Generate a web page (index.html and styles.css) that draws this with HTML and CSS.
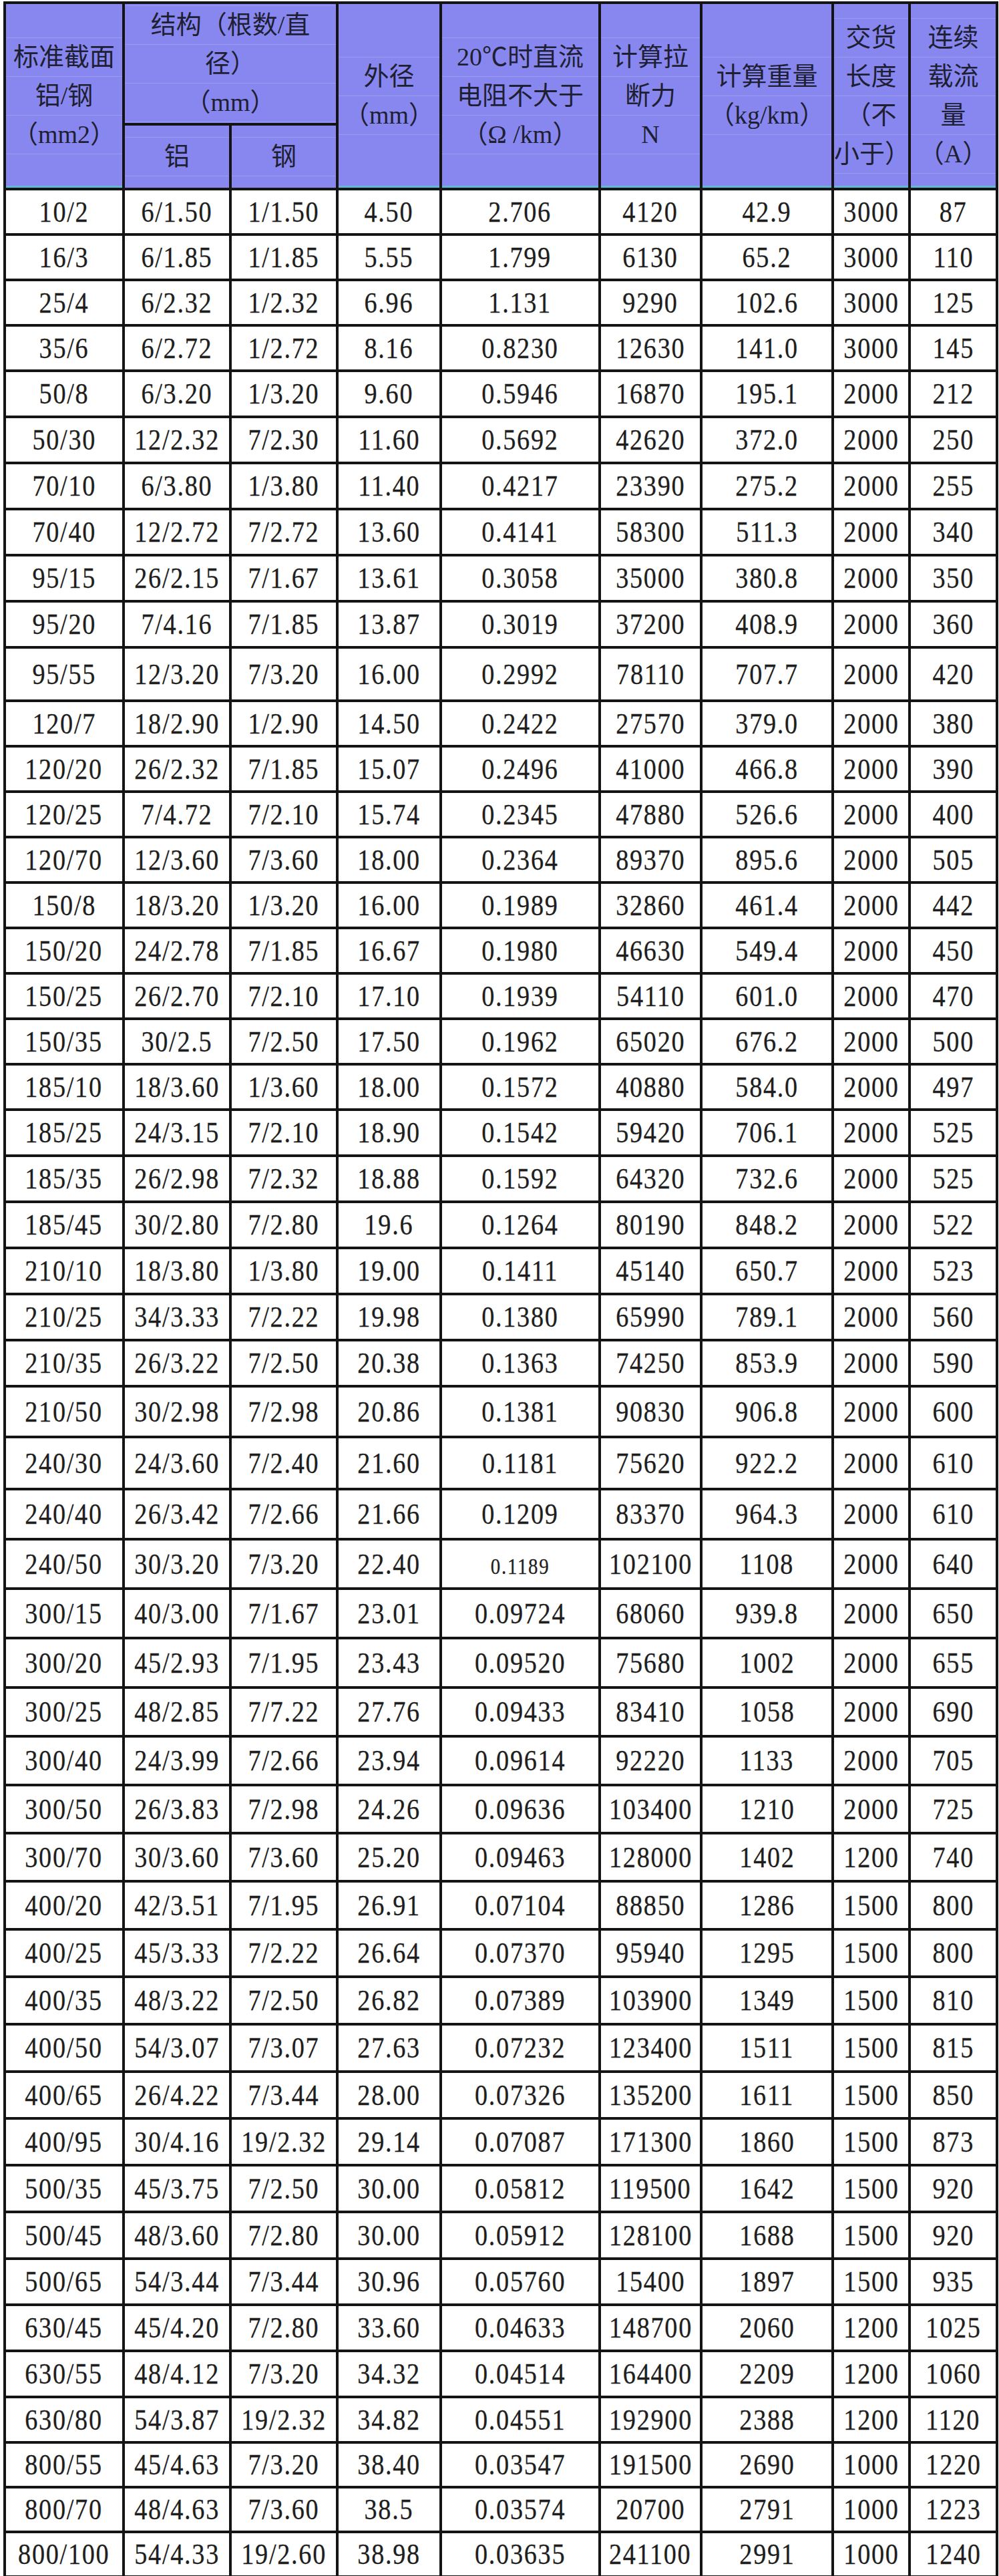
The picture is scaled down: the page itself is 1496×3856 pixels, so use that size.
FILE: index.html
```html
<!DOCTYPE html>
<html lang="zh-CN">
<head>
<meta charset="utf-8">
<title>钢芯铝绞线规格表</title>
<link rel="stylesheet" href="styles.css">
</head>
<body>
<table class="spec">
  <colgroup>
    <col class="c-std"><col class="c-al"><col class="c-st"><col class="c-od"><col class="c-res"><col class="c-ten"><col class="c-wt"><col class="c-len"><col class="c-cur">
  </colgroup>
  <thead>
    <tr class="hr1">
      <th rowspan="2" class="rs"><div class="ln">标准截面</div><div class="ln">铝/钢</div><div class="ln last">（mm2）</div></th>
      <th colspan="2"><div class="ln">结构（根数/直</div><div class="ln">径）</div><div class="ln last">（mm）</div></th>
      <th rowspan="2" class="rs"><div class="ln">外径</div><div class="ln last">（mm）</div></th>
      <th rowspan="2" class="rs"><div class="ln">20℃时直流</div><div class="ln">电阻不大于</div><div class="ln last">（Ω /km）</div></th>
      <th rowspan="2" class="rs"><div class="ln">计算拉</div><div class="ln">断力</div><div class="ln last">N</div></th>
      <th rowspan="2" class="rs"><div class="ln">计算重量</div><div class="ln last">（kg/km）</div></th>
      <th rowspan="2" class="rs narrow"><div class="ln">交货</div><div class="ln">长度</div><div class="ln">（不</div><div class="ln last">小于）</div></th>
      <th rowspan="2" class="rs"><div class="ln">连续</div><div class="ln">载流</div><div class="ln">量</div><div class="ln last">（A）</div></th>
    </tr>
    <tr class="hr2">
      <th><div class="ln last">铝</div></th>
      <th><div class="ln last">钢</div></th>
    </tr>
  </thead>
  <tbody>
    <tr class="h68"><td><span>10/2</span></td><td><span>6/1.50</span></td><td><span>1/1.50</span></td><td><span>4.50</span></td><td><span>2.706</span></td><td><span>4120</span></td><td><span>42.9</span></td><td><span>3000</span></td><td><span>87</span></td></tr>
    <tr class="h68"><td><span>16/3</span></td><td><span>6/1.85</span></td><td><span>1/1.85</span></td><td><span>5.55</span></td><td><span>1.799</span></td><td><span>6130</span></td><td><span>65.2</span></td><td><span>3000</span></td><td><span>110</span></td></tr>
    <tr class="h68"><td><span>25/4</span></td><td><span>6/2.32</span></td><td><span>1/2.32</span></td><td><span>6.96</span></td><td><span>1.131</span></td><td><span>9290</span></td><td><span>102.6</span></td><td><span>3000</span></td><td><span>125</span></td></tr>
    <tr class="h68"><td><span>35/6</span></td><td><span>6/2.72</span></td><td><span>1/2.72</span></td><td><span>8.16</span></td><td><span>0.8230</span></td><td><span>12630</span></td><td><span>141.0</span></td><td><span>3000</span></td><td><span>145</span></td></tr>
    <tr class="h69"><td><span>50/8</span></td><td><span>6/3.20</span></td><td><span>1/3.20</span></td><td><span>9.60</span></td><td><span>0.5946</span></td><td><span>16870</span></td><td><span>195.1</span></td><td><span>2000</span></td><td><span>212</span></td></tr>
    <tr class="h69"><td><span>50/30</span></td><td><span>12/2.32</span></td><td><span>7/2.30</span></td><td><span>11.60</span></td><td><span>0.5692</span></td><td><span>42620</span></td><td><span>372.0</span></td><td><span>2000</span></td><td><span>250</span></td></tr>
    <tr class="h69"><td><span>70/10</span></td><td><span>6/3.80</span></td><td><span>1/3.80</span></td><td><span>11.40</span></td><td><span>0.4217</span></td><td><span>23390</span></td><td><span>275.2</span></td><td><span>2000</span></td><td><span>255</span></td></tr>
    <tr class="h69"><td><span>70/40</span></td><td><span>12/2.72</span></td><td><span>7/2.72</span></td><td><span>13.60</span></td><td><span>0.4141</span></td><td><span>58300</span></td><td><span>511.3</span></td><td><span>2000</span></td><td><span>340</span></td></tr>
    <tr class="h69"><td><span>95/15</span></td><td><span>26/2.15</span></td><td><span>7/1.67</span></td><td><span>13.61</span></td><td><span>0.3058</span></td><td><span>35000</span></td><td><span>380.8</span></td><td><span>2000</span></td><td><span>350</span></td></tr>
    <tr class="h69"><td><span>95/20</span></td><td><span>7/4.16</span></td><td><span>7/1.85</span></td><td><span>13.87</span></td><td><span>0.3019</span></td><td><span>37200</span></td><td><span>408.9</span></td><td><span>2000</span></td><td><span>360</span></td></tr>
    <tr class="h80"><td><span>95/55</span></td><td><span>12/3.20</span></td><td><span>7/3.20</span></td><td><span>16.00</span></td><td><span>0.2992</span></td><td><span>78110</span></td><td><span>707.7</span></td><td><span>2000</span></td><td><span>420</span></td></tr>
    <tr class="h68"><td><span>120/7</span></td><td><span>18/2.90</span></td><td><span>1/2.90</span></td><td><span>14.50</span></td><td><span>0.2422</span></td><td><span>27570</span></td><td><span>379.0</span></td><td><span>2000</span></td><td><span>380</span></td></tr>
    <tr class="h68"><td><span>120/20</span></td><td><span>26/2.32</span></td><td><span>7/1.85</span></td><td><span>15.07</span></td><td><span>0.2496</span></td><td><span>41000</span></td><td><span>466.8</span></td><td><span>2000</span></td><td><span>390</span></td></tr>
    <tr class="h68"><td><span>120/25</span></td><td><span>7/4.72</span></td><td><span>7/2.10</span></td><td><span>15.74</span></td><td><span>0.2345</span></td><td><span>47880</span></td><td><span>526.6</span></td><td><span>2000</span></td><td><span>400</span></td></tr>
    <tr class="h68"><td><span>120/70</span></td><td><span>12/3.60</span></td><td><span>7/3.60</span></td><td><span>18.00</span></td><td><span>0.2364</span></td><td><span>89370</span></td><td><span>895.6</span></td><td><span>2000</span></td><td><span>505</span></td></tr>
    <tr class="h68"><td><span>150/8</span></td><td><span>18/3.20</span></td><td><span>1/3.20</span></td><td><span>16.00</span></td><td><span>0.1989</span></td><td><span>32860</span></td><td><span>461.4</span></td><td><span>2000</span></td><td><span>442</span></td></tr>
    <tr class="h68"><td><span>150/20</span></td><td><span>24/2.78</span></td><td><span>7/1.85</span></td><td><span>16.67</span></td><td><span>0.1980</span></td><td><span>46630</span></td><td><span>549.4</span></td><td><span>2000</span></td><td><span>450</span></td></tr>
    <tr class="h68"><td><span>150/25</span></td><td><span>26/2.70</span></td><td><span>7/2.10</span></td><td><span>17.10</span></td><td><span>0.1939</span></td><td><span>54110</span></td><td><span>601.0</span></td><td><span>2000</span></td><td><span>470</span></td></tr>
    <tr class="h68"><td><span>150/35</span></td><td><span>30/2.5</span></td><td><span>7/2.50</span></td><td><span>17.50</span></td><td><span>0.1962</span></td><td><span>65020</span></td><td><span>676.2</span></td><td><span>2000</span></td><td><span>500</span></td></tr>
    <tr class="h68"><td><span>185/10</span></td><td><span>18/3.60</span></td><td><span>1/3.60</span></td><td><span>18.00</span></td><td><span>0.1572</span></td><td><span>40880</span></td><td><span>584.0</span></td><td><span>2000</span></td><td><span>497</span></td></tr>
    <tr class="h69"><td><span>185/25</span></td><td><span>24/3.15</span></td><td><span>7/2.10</span></td><td><span>18.90</span></td><td><span>0.1542</span></td><td><span>59420</span></td><td><span>706.1</span></td><td><span>2000</span></td><td><span>525</span></td></tr>
    <tr class="h69"><td><span>185/35</span></td><td><span>26/2.98</span></td><td><span>7/2.32</span></td><td><span>18.88</span></td><td><span>0.1592</span></td><td><span>64320</span></td><td><span>732.6</span></td><td><span>2000</span></td><td><span>525</span></td></tr>
    <tr class="h69"><td><span>185/45</span></td><td><span>30/2.80</span></td><td><span>7/2.80</span></td><td><span>19.6</span></td><td><span>0.1264</span></td><td><span>80190</span></td><td><span>848.2</span></td><td><span>2000</span></td><td><span>522</span></td></tr>
    <tr class="h69"><td><span>210/10</span></td><td><span>18/3.80</span></td><td><span>1/3.80</span></td><td><span>19.00</span></td><td><span>0.1411</span></td><td><span>45140</span></td><td><span>650.7</span></td><td><span>2000</span></td><td><span>523</span></td></tr>
    <tr class="h69"><td><span>210/25</span></td><td><span>34/3.33</span></td><td><span>7/2.22</span></td><td><span>19.98</span></td><td><span>0.1380</span></td><td><span>65990</span></td><td><span>789.1</span></td><td><span>2000</span></td><td><span>560</span></td></tr>
    <tr class="h69"><td><span>210/35</span></td><td><span>26/3.22</span></td><td><span>7/2.50</span></td><td><span>20.38</span></td><td><span>0.1363</span></td><td><span>74250</span></td><td><span>853.9</span></td><td><span>2000</span></td><td><span>590</span></td></tr>
    <tr class="h76"><td><span>210/50</span></td><td><span>30/2.98</span></td><td><span>7/2.98</span></td><td><span>20.86</span></td><td><span>0.1381</span></td><td><span>90830</span></td><td><span>906.8</span></td><td><span>2000</span></td><td><span>600</span></td></tr>
    <tr class="h78 seam"><td><span>240/30</span></td><td><span>24/3.60</span></td><td><span>7/2.40</span></td><td><span>21.60</span></td><td><span>0.1181</span></td><td><span>75620</span></td><td><span>922.2</span></td><td><span>2000</span></td><td><span>610</span></td></tr>
    <tr class="h75"><td><span>240/40</span></td><td><span>26/3.42</span></td><td><span>7/2.66</span></td><td><span>21.66</span></td><td><span>0.1209</span></td><td><span>83370</span></td><td><span>964.3</span></td><td><span>2000</span></td><td><span>610</span></td></tr>
    <tr class="h74"><td><span>240/50</span></td><td><span>30/3.20</span></td><td><span>7/3.20</span></td><td><span>22.40</span></td><td><span class="sm">0.1189</span></td><td><span>102100</span></td><td><span>1108</span></td><td><span>2000</span></td><td><span>640</span></td></tr>
    <tr class="h74"><td><span>300/15</span></td><td><span>40/3.00</span></td><td><span>7/1.67</span></td><td><span>23.01</span></td><td><span>0.09724</span></td><td><span>68060</span></td><td><span>939.8</span></td><td><span>2000</span></td><td><span>650</span></td></tr>
    <tr class="h74"><td><span>300/20</span></td><td><span>45/2.93</span></td><td><span>7/1.95</span></td><td><span>23.43</span></td><td><span>0.09520</span></td><td><span>75680</span></td><td><span>1002</span></td><td><span>2000</span></td><td><span>655</span></td></tr>
    <tr class="h73"><td><span>300/25</span></td><td><span>48/2.85</span></td><td><span>7/7.22</span></td><td><span>27.76</span></td><td><span>0.09433</span></td><td><span>83410</span></td><td><span>1058</span></td><td><span>2000</span></td><td><span>690</span></td></tr>
    <tr class="h73"><td><span>300/40</span></td><td><span>24/3.99</span></td><td><span>7/2.66</span></td><td><span>23.94</span></td><td><span>0.09614</span></td><td><span>92220</span></td><td><span>1133</span></td><td><span>2000</span></td><td><span>705</span></td></tr>
    <tr class="h72"><td><span>300/50</span></td><td><span>26/3.83</span></td><td><span>7/2.98</span></td><td><span>24.26</span></td><td><span>0.09636</span></td><td><span>103400</span></td><td><span>1210</span></td><td><span>2000</span></td><td><span>725</span></td></tr>
    <tr class="h72"><td><span>300/70</span></td><td><span>30/3.60</span></td><td><span>7/3.60</span></td><td><span>25.20</span></td><td><span>0.09463</span></td><td><span>128000</span></td><td><span>1402</span></td><td><span>1200</span></td><td><span>740</span></td></tr>
    <tr class="h72"><td><span>400/20</span></td><td><span>42/3.51</span></td><td><span>7/1.95</span></td><td><span>26.91</span></td><td><span>0.07104</span></td><td><span>88850</span></td><td><span>1286</span></td><td><span>1500</span></td><td><span>800</span></td></tr>
    <tr class="h71"><td><span>400/25</span></td><td><span>45/3.33</span></td><td><span>7/2.22</span></td><td><span>26.64</span></td><td><span>0.07370</span></td><td><span>95940</span></td><td><span>1295</span></td><td><span>1500</span></td><td><span>800</span></td></tr>
    <tr class="h71"><td><span>400/35</span></td><td><span>48/3.22</span></td><td><span>7/2.50</span></td><td><span>26.82</span></td><td><span>0.07389</span></td><td><span>103900</span></td><td><span>1349</span></td><td><span>1500</span></td><td><span>810</span></td></tr>
    <tr class="h71"><td><span>400/50</span></td><td><span>54/3.07</span></td><td><span>7/3.07</span></td><td><span>27.63</span></td><td><span>0.07232</span></td><td><span>123400</span></td><td><span>1511</span></td><td><span>1500</span></td><td><span>815</span></td></tr>
    <tr class="h70"><td><span>400/65</span></td><td><span>26/4.22</span></td><td><span>7/3.44</span></td><td><span>28.00</span></td><td><span>0.07326</span></td><td><span>135200</span></td><td><span>1611</span></td><td><span>1500</span></td><td><span>850</span></td></tr>
    <tr class="h70"><td><span>400/95</span></td><td><span>30/4.16</span></td><td><span>19/2.32</span></td><td><span>29.14</span></td><td><span>0.07087</span></td><td><span>171300</span></td><td><span>1860</span></td><td><span>1500</span></td><td><span>873</span></td></tr>
    <tr class="h70"><td><span>500/35</span></td><td><span>45/3.75</span></td><td><span>7/2.50</span></td><td><span>30.00</span></td><td><span>0.05812</span></td><td><span>119500</span></td><td><span>1642</span></td><td><span>1500</span></td><td><span>920</span></td></tr>
    <tr class="h70"><td><span>500/45</span></td><td><span>48/3.60</span></td><td><span>7/2.80</span></td><td><span>30.00</span></td><td><span>0.05912</span></td><td><span>128100</span></td><td><span>1688</span></td><td><span>1500</span></td><td><span>920</span></td></tr>
    <tr class="h69"><td><span>500/65</span></td><td><span>54/3.44</span></td><td><span>7/3.44</span></td><td><span>30.96</span></td><td><span>0.05760</span></td><td><span>15400</span></td><td><span>1897</span></td><td><span>1500</span></td><td><span>935</span></td></tr>
    <tr class="h69"><td><span>630/45</span></td><td><span>45/4.20</span></td><td><span>7/2.80</span></td><td><span>33.60</span></td><td><span>0.04633</span></td><td><span>148700</span></td><td><span>2060</span></td><td><span>1200</span></td><td><span>1025</span></td></tr>
    <tr class="h69"><td><span>630/55</span></td><td><span>48/4.12</span></td><td><span>7/3.20</span></td><td><span>34.32</span></td><td><span>0.04514</span></td><td><span>164400</span></td><td><span>2209</span></td><td><span>1200</span></td><td><span>1060</span></td></tr>
    <tr class="h68"><td><span>630/80</span></td><td><span>54/3.87</span></td><td><span>19/2.32</span></td><td><span>34.82</span></td><td><span>0.04551</span></td><td><span>192900</span></td><td><span>2388</span></td><td><span>1200</span></td><td><span>1120</span></td></tr>
    <tr class="h67"><td><span>800/55</span></td><td><span>45/4.63</span></td><td><span>7/3.20</span></td><td><span>38.40</span></td><td><span>0.03547</span></td><td><span>191500</span></td><td><span>2690</span></td><td><span>1000</span></td><td><span>1220</span></td></tr>
    <tr class="h67"><td><span>800/70</span></td><td><span>48/4.63</span></td><td><span>7/3.60</span></td><td><span>38.5</span></td><td><span>0.03574</span></td><td><span>20700</span></td><td><span>2791</span></td><td><span>1000</span></td><td><span>1223</span></td></tr>
    <tr class="h67"><td><span>800/100</span></td><td><span>54/4.33</span></td><td><span>19/2.60</span></td><td><span>38.98</span></td><td><span>0.03635</span></td><td><span>241100</span></td><td><span>2991</span></td><td><span>1000</span></td><td><span>1240</span></td></tr>
  </tbody>
</table>
</body>
</html>
```

FILE: styles.css
```css
html, body {
  margin: 0;
  padding: 0;
  background: #ffffff;
}

body {
  padding: 2px 0 0 5px;
}

.spec {
  border-collapse: collapse;
  table-layout: fixed;
  width: 1490px;
  color: #1e1e1e;
}

.c-std { width: 178px; }
.c-al  { width: 160px; }
.c-st  { width: 160px; }
.c-od  { width: 155px; }
.c-res { width: 238px; }
.c-ten { width: 152px; }
.c-wt  { width: 197px; }
.c-len { width: 115px; }
.c-cur { width: 131px; }

.spec th,
.spec td {
  border-top: 4px solid #141414;
  border-bottom: 4px solid #141414;
  border-left: 4px solid #141414;
  border-right: 4px solid #141414;
  padding: 0;
  text-align: center;
  vertical-align: middle;
}

/* header */
.spec th {
  background: #8787ef;
  font-family: "Liberation Serif", "Noto Sans CJK SC", serif;
  font-weight: 400;
  font-size: 38px;
  color: #1f1f33;
  white-space: nowrap;
}

.spec th.rs {
  box-shadow: inset 0 -3px 0 #63b6d6;
}

.spec th.narrow {
  overflow: visible;
}

.hr1 { height: 182px; }
.hr2 { height: 97px; }

.ln {
  height: 57px;
  line-height: 57px;
  border-top: 1px solid rgba(255, 255, 255, 0.16);
}

.ln.last {
  border-bottom: 1px solid rgba(255, 255, 255, 0.16);
}

/* body rows */
.spec td {
  background: #ffffff;
  font-family: "Liberation Serif", "Times New Roman", serif;
  font-size: 45px;
  line-height: 1;
  white-space: nowrap;
}

.spec td span {
  display: inline-block;
  letter-spacing: 2px;
  transform: scaleX(0.85);
  transform-origin: center;
  -webkit-text-stroke: 0.3px #1e1e1e;
}

.spec td span.sm {
  font-size: 34px;
}

.h67 { height: 67px; }
.h68 { height: 68px; }
.h69 { height: 69px; }
.h70 { height: 70px; }
.h71 { height: 71px; }
.h72 { height: 72px; }
.h73 { height: 73px; }
.h74 { height: 74px; }
.h75 { height: 75px; }
.h76 { height: 76px; }
.h78 { height: 78px; }
.h80 { height: 80px; }
```
